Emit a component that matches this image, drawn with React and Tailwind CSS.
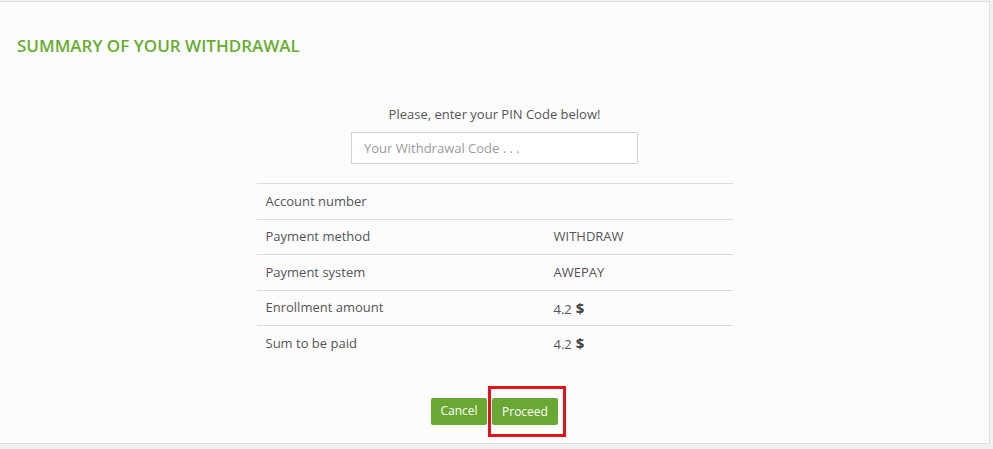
const rows = [
  { label: "Account number", value: "" },
  { label: "Payment method", value: "WITHDRAW" },
  { label: "Payment system", value: "AWEPAY" },
  { label: "Enrollment amount", value: "4.2", currency: true },
  { label: "Sum to be paid", value: "4.2", currency: true },
];

export default function App() {
  return (
    <div className="w-[993px] h-[449px] bg-[#f0f0f0] font-['Open_Sans',sans-serif] overflow-hidden">
      <div className="mt-[1px] w-[990px] h-[443px] bg-[#fcfcfc] border-t border-r border-b border-[#dedede] pt-[33px] px-[17px]">
        <h2 className="text-[17px] leading-[22px] font-semibold text-[#67ae2f]">
          SUMMARY OF YOUR WITHDRAWAL
        </h2>

        <div className="flex flex-col items-center mt-[48px]">
          <p className="text-[13px] leading-[18px] text-[#555]">Please, enter your PIN Code below!</p>
          <input
            type="text"
            placeholder="Your Withdrawal Code . . ."
            className="mt-[9px] w-[287px] h-[32px] border border-[#d4d4d4] bg-white px-[12px] text-[13px] text-[#555] placeholder:text-[#9a9a9a] outline-none"
          />

          {/* summary table */}
          <div className="mt-[19px] w-[476px] text-[13px] text-[#555]">
            {rows.map((r) => (
              <div key={r.label} className="grid grid-cols-[288px_1fr] h-[35.5px] border-t border-[#dcdcdc] items-center">
                <span className="pl-[9px]">{r.label}</span>
                <span className="pl-[9px]">
                  {r.value}
                  {r.currency && <b className="ml-[4px] text-[15px] font-bold text-[#444]">$</b>}
                </span>
              </div>
            ))}
          </div>

          <div className="mt-[37px] flex gap-[5px]">
            <button className="w-[56px] h-[27px] rounded-[2px] bg-[#69a832] text-white text-[12px]">Cancel</button>
            <div className="relative">
              <button className="w-[66px] h-[27px] rounded-[2px] bg-[#69a832] text-white text-[12px]">Proceed</button>
              <span className="absolute -left-[4px] -right-[8px] -top-[12px] -bottom-[12px] border-[3px] border-[#e3131b] pointer-events-none" />
            </div>
          </div>
        </div>
      </div>
    </div>
  );
}
